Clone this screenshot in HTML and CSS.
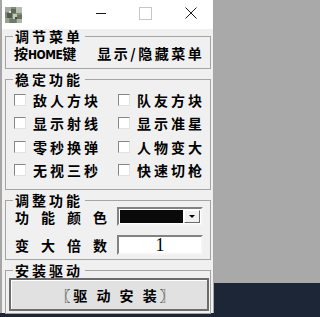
FILE: index.html
```html
<!DOCTYPE html>
<html lang="zh-CN">
<head>
<meta charset="utf-8">
<title>调节菜单</title>
<link rel="stylesheet" href="styles.css">
</head>
<body>
<div class="window">
  <div class="titlebar">
    <svg class="app-icon" viewBox="0 0 17 16" aria-hidden="true">
      <rect width="17" height="16" fill="#7f8a7a"/>
      <rect x="0" y="0" width="6" height="5" fill="#a4ab9c"/>
      <rect x="6" y="2" width="5" height="4" fill="#5d6a5a"/>
      <rect x="11" y="0" width="6" height="6" fill="#b8bdb0"/>
      <rect x="2" y="6" width="5" height="5" fill="#4f5b4c"/>
      <rect x="8" y="7" width="4" height="5" fill="#c5c9bf"/>
      <rect x="12" y="8" width="5" height="4" fill="#66725f"/>
      <rect x="0" y="11" width="4" height="5" fill="#9aa293"/>
      <rect x="5" y="12" width="6" height="4" fill="#6f7a6a"/>
      <rect x="12" y="12" width="5" height="4" fill="#aeb4a6"/>
      <rect x="4" y="4" width="2" height="2" fill="#e2e4de"/>
      <rect x="10" y="10" width="2" height="2" fill="#3f4a3d"/>
    </svg>
    <div class="caption-buttons">
      <span class="cap cap-min"></span>
      <span class="cap cap-max"></span>
      <span class="cap cap-close">
        <svg viewBox="0 0 12 12" aria-hidden="true"><path d="M0.5 0.5 L11.5 11.5 M11.5 0.5 L0.5 11.5" stroke="#1a1a1a" stroke-width="1"/></svg>
      </span>
    </div>
  </div>
  <div class="client">
    <fieldset class="group">
      <legend>调节菜单</legend>
      <div class="hint"><span class="hint-key">按<span class="latin">HOME</span>键</span><span class="hint-text">显示/隐藏菜单</span></div>
    </fieldset>
    <fieldset class="group">
      <legend>稳定功能</legend>
      <div class="checks">
        <label class="check"><span class="box"></span>敌人方块</label>
        <label class="check"><span class="box"></span>队友方块</label>
        <label class="check"><span class="box"></span>显示射线</label>
        <label class="check"><span class="box"></span>显示准星</label>
        <label class="check"><span class="box"></span>零秒换弹</label>
        <label class="check"><span class="box"></span>人物变大</label>
        <label class="check"><span class="box"></span>无视三秒</label>
        <label class="check"><span class="box"></span>快速切枪</label>
      </div>
    </fieldset>
    <fieldset class="group">
      <legend>调整功能</legend>
      <div class="form">
        <span class="form-label">功能颜色</span>
        <div class="combo"><span class="combo-value"></span><span class="combo-arrow"><span class="tri"></span></span></div>
        <span class="form-label">变大倍数</span>
        <div class="field">1</div>
      </div>
    </fieldset>
    <fieldset class="group">
      <legend>安装驱动</legend>
      <button class="install" type="button">〖驱 动 安 装〗</button>
    </fieldset>
  </div>
</div>
</body>
</html>
```
FILE: styles.css
```css
* { box-sizing: border-box; }
html, body { margin: 0; padding: 0; }
body {
  width: 217px;
  height: 317px;
  overflow: hidden;
  background: linear-gradient(#a9a9a9 0 283px, #1d2637 283px);
  font-family: "Noto Sans CJK SC", sans-serif;
  color: #000;
}
.window {
  width: 214px;
  height: 313px;
  background: #f0f0f0;
  border-left: 2px solid #a6a6a6;
  border-right: 1px solid #a6a6a6;
  display: flex;
  flex-direction: column;
}
.titlebar {
  flex: none;
  height: 29px;
  background: #fff;
  display: flex;
  align-items: center;
}
.app-icon { width: 17px; height: 16px; margin-left: 3px; }
.caption-buttons { margin-left: auto; display: flex; }
.cap {
  width: 45px;
  height: 29px;
  display: flex;
  align-items: center;
  justify-content: center;
  padding-bottom: 3px;
}
.cap-min::before { content: ""; width: 10px; height: 1px; background: #1a1a1a; }
.cap-max::before { content: ""; width: 11px; height: 11px; border: 1px solid #c6c6c6; }
.cap-close svg { width: 12px; height: 12px; display: block; }

.client {
  padding: 0 2px 0 3px;
  display: flex;
  flex-direction: column;
  gap: 3px;
}
.group {
  margin: 0;
  padding: 0;
  min-width: 0;
  border: 1px solid #a4a4a4;
}
.group legend {
  margin-left: 7px;
  padding: 0 2px;
  font-size: 14px;
  line-height: 14px;
  font-weight: 700;
  letter-spacing: 3px;
}
.hint {
  display: flex;
  align-items: baseline;
  margin-top: 3px;
  padding: 0 0 6px 8px;
  font-size: 14px;
  line-height: 14px;
  font-weight: 700;
  white-space: nowrap;
}
.latin {
  font-family: "Liberation Sans Narrow", "DejaVu Sans Condensed", "Liberation Sans", sans-serif;
  font-stretch: condensed;
  font-size: 12px;
  letter-spacing: -0.5px;
}
.hint-text { margin-left: 21px; letter-spacing: 2.5px; }

.checks {
  display: grid;
  grid-template-columns: 104px 1fr;
  grid-auto-rows: 23.5px;
  padding: 2px 0 7px 8px;
}
.check {
  display: flex;
  align-items: center;
  gap: 7px;
  font-size: 14px;
  line-height: 14px;
  font-weight: 700;
  letter-spacing: 3px;
  white-space: nowrap;
}
.box {
  flex: none;
  width: 12px;
  height: 12px;
  background: #fff;
  border: 1px solid;
  border-color: #858585 #e2e2e2 #e2e2e2 #858585;
}

.form {
  display: grid;
  grid-template-columns: 102px 86px;
  grid-template-rows: 19px 20px;
  row-gap: 9px;
  padding: 0 0 4px 9px;
}
.form-label {
  align-self: center;
  font-size: 14px;
  line-height: 14px;
  font-weight: 700;
  letter-spacing: 12px;
  white-space: nowrap;
}
.combo {
  display: flex;
  gap: 1px;
  padding: 1px;
  background: #fff;
  border: 2px solid;
  border-color: #828282 #f4f4f4 #f4f4f4 #828282;
}
.combo-value { flex: 1; background: #0a0a0a; }
.combo-arrow {
  flex: none;
  width: 16px;
  display: flex;
  align-items: center;
  justify-content: center;
  background: #f0f0f0;
  border: 1px solid;
  border-color: #fff #6a6a6a #6a6a6a #fff;
}
.tri {
  width: 0;
  height: 0;
  border-left: 3px solid transparent;
  border-right: 3px solid transparent;
  border-top: 3px solid #000;
}
.field {
  background: #fff;
  border: 2px solid;
  border-color: #828282 #f4f4f4 #f4f4f4 #828282;
  font-family: "Liberation Serif", serif;
  font-size: 18px;
  line-height: 16px;
  text-align: center;
}
.install {
  display: block;
  width: 200px;
  height: 33px;
  margin: 1px 0 2px 3px;
  padding: 0 0 0 15px;
  border: 2px solid #6c6c6c;
  background: #e1e1e1;
  box-shadow: inset 1px 1px 0 #fff;
  font-family: "Noto Sans CJK SC", sans-serif;
  font-size: 14px;
  font-weight: 700;
  letter-spacing: 3px;
  color: #000;
}
```
